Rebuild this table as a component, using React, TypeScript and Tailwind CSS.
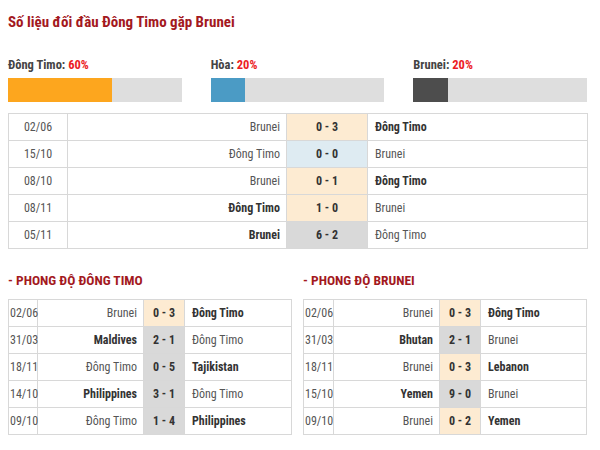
const font = { fontFamily: "'Roboto Condensed', 'Liberation Sans Narrow', sans-serif" };

type Row = { date: string; home: string; score: string; away: string; win: "home" | "away" | "none"; tone: "orange" | "blue" | "grey" };

const h2h: Row[] = [
  { date: "02/06", home: "Brunei", score: "0 - 3", away: "Đông Timo", win: "away", tone: "orange" },
  { date: "15/10", home: "Đông Timo", score: "0 - 0", away: "Brunei", win: "none", tone: "blue" },
  { date: "08/10", home: "Brunei", score: "0 - 1", away: "Đông Timo", win: "away", tone: "orange" },
  { date: "08/11", home: "Đông Timo", score: "1 - 0", away: "Brunei", win: "home", tone: "orange" },
  { date: "05/11", home: "Brunei", score: "6 - 2", away: "Đông Timo", win: "home", tone: "grey" },
];

const formTimo: Row[] = [
  { date: "02/06", home: "Brunei", score: "0 - 3", away: "Đông Timo", win: "away", tone: "orange" },
  { date: "31/03", home: "Maldives", score: "2 - 1", away: "Đông Timo", win: "home", tone: "grey" },
  { date: "18/11", home: "Đông Timo", score: "0 - 5", away: "Tajikistan", win: "away", tone: "grey" },
  { date: "14/10", home: "Philippines", score: "3 - 1", away: "Đông Timo", win: "home", tone: "grey" },
  { date: "09/10", home: "Đông Timo", score: "1 - 4", away: "Philippines", win: "away", tone: "grey" },
];

const formBrunei: Row[] = [
  { date: "02/06", home: "Brunei", score: "0 - 3", away: "Đông Timo", win: "away", tone: "orange" },
  { date: "31/03", home: "Bhutan", score: "2 - 1", away: "Brunei", win: "home", tone: "grey" },
  { date: "18/11", home: "Brunei", score: "0 - 3", away: "Lebanon", win: "away", tone: "orange" },
  { date: "15/10", home: "Yemen", score: "9 - 0", away: "Brunei", win: "home", tone: "grey" },
  { date: "09/10", home: "Brunei", score: "0 - 2", away: "Yemen", win: "away", tone: "orange" },
];

const toneBg = { orange: "bg-[#fdebd2]", blue: "bg-[#deebf2]", grey: "bg-[#d9d9d9]" };

function Bar({ label, pct, color }: { label: string; pct: number; color: string }) {
  return (
    <div className="flex flex-col">
      <div className="text-[12.5px] font-bold leading-[16px] text-[#444]">
        {label}: <span className="text-[#ec1c24]">{pct}%</span>
      </div>
      <div className="mt-[5px] h-[24px] bg-[#dedede]">
        <div className={`h-full ${color}`} style={{ width: `${pct}%` }} />
      </div>
    </div>
  );
}

function MatchTable({ rows, cols, dateAlign }: { rows: Row[]; cols: number[]; dateAlign: string }) {
  return (
    <table className="w-full table-fixed border-collapse text-[12px] text-[#555]">
      <colgroup>
        {cols.map((w, i) => (
          <col key={i} style={{ width: w }} />
        ))}
      </colgroup>
      <tbody>
        {rows.map((r, i) => (
          <tr key={i} className="h-[27px]">
            <td className={`border border-[#d8d8d8] p-0 ${dateAlign}`}>{r.date}</td>
            <td className={`border border-[#d8d8d8] px-[6px] text-right ${r.win === "home" ? "font-bold text-[#333]" : ""}`}>{r.home}</td>
            <td className={`border border-[#d8d8d8] p-0 text-center font-bold text-[#333] ${toneBg[r.tone]}`}>{r.score}</td>
            <td className={`border border-[#d8d8d8] px-[7px] text-left ${r.win === "away" ? "font-bold text-[#333]" : ""}`}>{r.away}</td>
          </tr>
        ))}
      </tbody>
    </table>
  );
}

export default function App() {
  return (
    <div className="h-[450px] w-[600px] bg-white px-2" style={font}>
      <h1 className="pt-[12px] text-[15px] font-bold leading-[20px] text-[#a3191e]">Số liệu đối đầu Đông Timo gặp Brunei</h1>
      <div className="mt-[25px] grid grid-cols-3 gap-x-[29px] pr-[5px]">
        <Bar label="Đông Timo" pct={60} color="bg-[#fda61e]" />
        <Bar label="Hòa" pct={20} color="bg-[#4b9bc5]" />
        <Bar label="Brunei" pct={20} color="bg-[#4d4d4d]" />
      </div>
      <div className="mt-[11px] pr-[5px]">
        <MatchTable rows={h2h} cols={[59, 219, 81, 220]} dateAlign="text-center" />
      </div>
      <div className="mt-[22px] flex gap-[12px]">
        <div className="w-[283px]">
          <h2 className="text-[13.5px] font-bold leading-[18px] text-[#a3191e]">- PHONG ĐỘ ĐÔNG TIMO</h2>
          <div className="mt-[10px]">
            <MatchTable rows={formTimo} cols={[29, 106, 41, 107]} dateAlign="text-left pl-[1px]" />
          </div>
        </div>
        <div className="w-[283px]">
          <h2 className="text-[13.5px] font-bold leading-[18px] text-[#a3191e]">- PHONG ĐỘ BRUNEI</h2>
          <div className="mt-[10px]">
            <MatchTable rows={formBrunei} cols={[30, 106, 41, 106]} dateAlign="text-left pl-[1px]" />
          </div>
        </div>
      </div>
    </div>
  );
}
